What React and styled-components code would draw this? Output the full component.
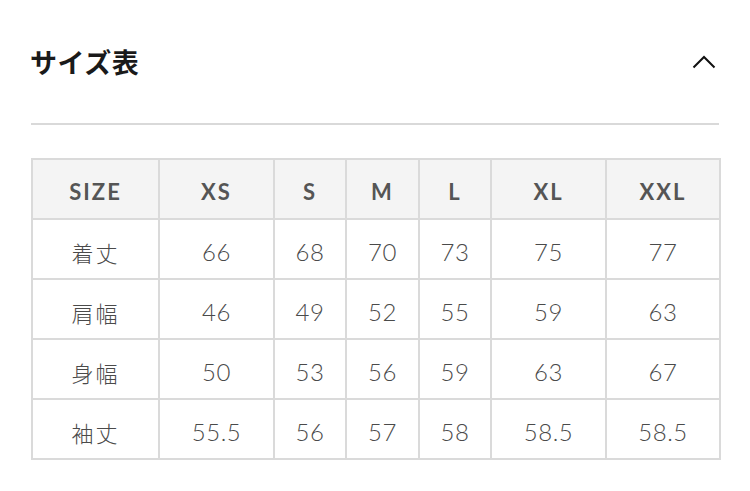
import React from 'react';
import styled, { createGlobalStyle } from 'styled-components';

const GlobalStyle = createGlobalStyle`
  html, body {
    margin: 0;
    padding: 0;
    background: #ffffff;
  }
  body {
    font-family: Lato, "Noto Sans CJK JP", sans-serif;
  }
`;

const Section = styled.section`
  width: 750px;
  padding: 0 31px;
  box-sizing: border-box;
`;

const Header = styled.div`
  display: flex;
  align-items: center;
  justify-content: space-between;
  height: 123px;
  border-bottom: 2px solid #d9d9d9;
`;

const Title = styled.h2`
  margin: 0 0 0 -1px;
  font-family: "Noto Sans CJK JP", sans-serif;
  font-size: 27px;
  font-weight: 700;
  color: #1a1a1a;
  letter-spacing: 0.5px;
`;

const Toggle = styled.button`
  display: flex;
  align-items: center;
  justify-content: center;
  width: 30px;
  height: 30px;
  padding: 0;
  border: none;
  background: none;
`;

const Table = styled.table`
  margin-top: 33px;
  width: 688px;
  border-collapse: collapse;
  table-layout: fixed;
`;

const Cell = styled.td`
  height: 53px;
  padding: 5px 0 0;
  border: 2px solid #dadada;
  text-align: center;
  vertical-align: middle;
  color: #4a4a4a;
  font-family: ${p => (p.$jp ? '"Noto Sans CJK JP", sans-serif' : 'Lato, sans-serif')};
  font-size: ${p => (p.$jp ? '22px' : '24px')};
  font-weight: 300;
  letter-spacing: ${p => (p.$jp ? '2px' : '0.5px')};
`;

const HeadCell = styled.th`
  height: 53px;
  padding: 5px 0 0;
  border: 2px solid #dadada;
  background: #f4f4f4;
  text-align: center;
  vertical-align: middle;
  color: #555555;
  font-family: Lato, sans-serif;
  font-size: 22px;
  font-weight: 700;
  letter-spacing: 2px;
`;

const columns = [
  { label: 'SIZE', width: 127 },
  { label: 'XS', width: 115 },
  { label: 'S', width: 72 },
  { label: 'M', width: 73 },
  { label: 'L', width: 72 },
  { label: 'XL', width: 115 },
  { label: 'XXL', width: 114 },
];

const rows = [
  ['着丈', '66', '68', '70', '73', '75', '77'],
  ['肩幅', '46', '49', '52', '55', '59', '63'],
  ['身幅', '50', '53', '56', '59', '63', '67'],
  ['袖丈', '55.5', '56', '57', '58', '58.5', '58.5'],
];

function ChevronUp() {
  return (
    <svg width="24" height="14" viewBox="0 0 24 14" fill="none">
      <path d="M1.5 12.5L12 2L22.5 12.5" stroke="#111" strokeWidth="2" />
    </svg>
  );
}

export default function App() {
  return (
    <>
      <GlobalStyle />
      <Section>
        <Header>
          <Title>サイズ表</Title>
          <Toggle aria-label="閉じる">
            <ChevronUp />
          </Toggle>
        </Header>
        <Table>
          <colgroup>
            {columns.map(c => (
              <col key={c.label} style={{ width: c.width }} />
            ))}
          </colgroup>
          <thead>
            <tr>
              {columns.map(c => (
                <HeadCell key={c.label}>{c.label}</HeadCell>
              ))}
            </tr>
          </thead>
          <tbody>
            {rows.map(r => (
              <tr key={r[0]}>
                {r.map((v, i) => (
                  <Cell key={i} $jp={i === 0}>{v}</Cell>
                ))}
              </tr>
            ))}
          </tbody>
        </Table>
      </Section>
    </>
  );
}
